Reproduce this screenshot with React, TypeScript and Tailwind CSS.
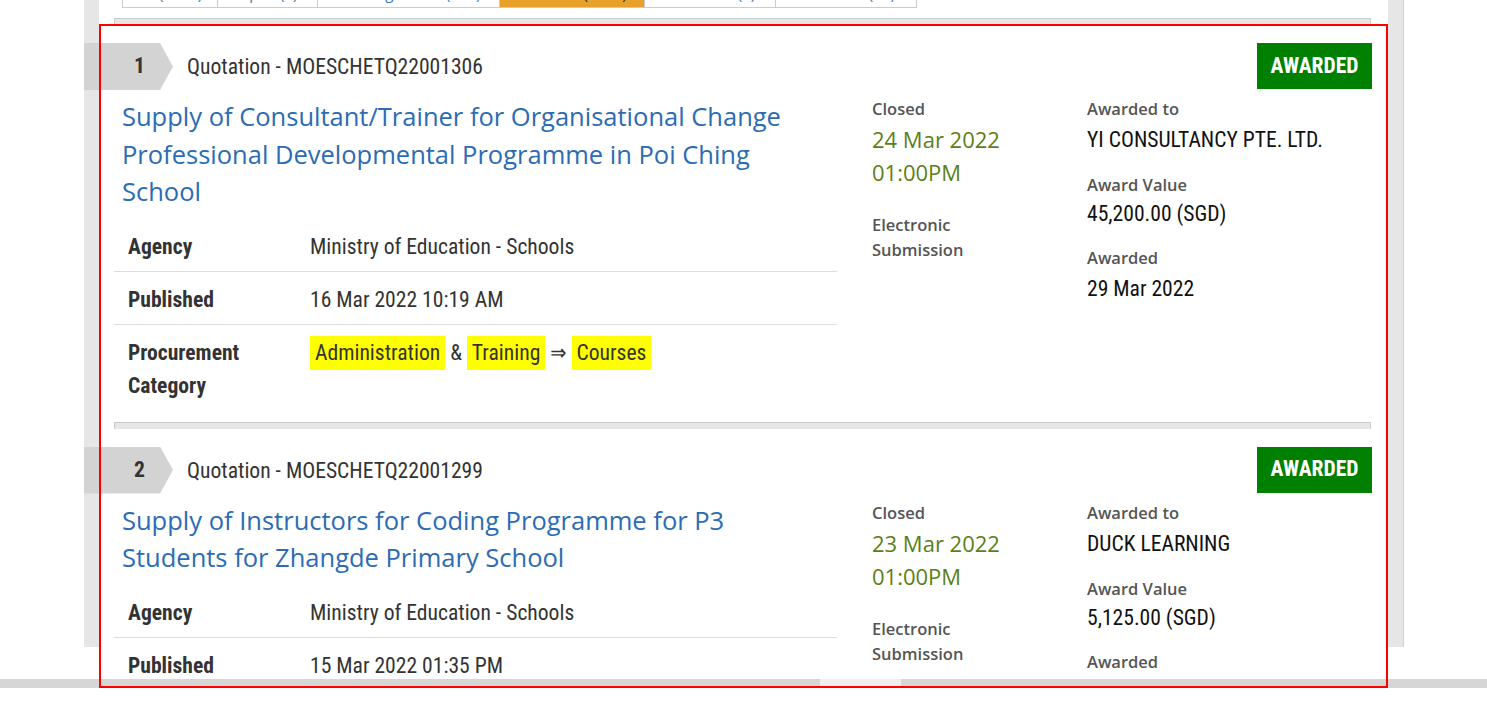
import type { ReactNode } from "react";

const cond = "font-['Roboto_Condensed','Liberation_Sans_Narrow','DejaVu_Sans_Condensed',sans-serif]";
const open = "font-['Open_Sans',sans-serif]";

type Tender = {
  no: number;
  ref: string;
  title: string;
  agency: string;
  published: string;
  closedDate: string;
  closedTime: string;
  awardedTo: string;
  value: string;
  awarded: string;
};

const tabs = [
  { label: "All", count: "(1360)", w: "w-[96px]" },
  { label: "Open", count: "(0)", w: "w-[100px]" },
  { label: "Pending Award", count: "(186)", w: "w-[182px]" },
  { label: "Awarded", count: "(1104)", w: "w-[145px]", active: true },
  { label: "No Award", count: "(0)", w: "w-[131px]" },
  { label: "Cancelled", count: "(70)", w: "w-[141px]" },
];

const tenders: Tender[] = [
  {
    no: 1,
    ref: "Quotation - MOESCHETQ22001306",
    title:
      "Supply of Consultant/Trainer for Organisational Change Professional Developmental Programme in Poi Ching School",
    agency: "Ministry of Education - Schools",
    published: "16 Mar 2022 10:19 AM",
    closedDate: "24 Mar 2022",
    closedTime: "01:00PM",
    awardedTo: "YI CONSULTANCY PTE. LTD.",
    value: "45,200.00 (SGD)",
    awarded: "29 Mar 2022",
  },
  {
    no: 2,
    ref: "Quotation - MOESCHETQ22001299",
    title: "Supply of Instructors for Coding Programme for P3 Students for Zhangde Primary School",
    agency: "Ministry of Education - Schools",
    published: "15 Mar 2022 01:35 PM",
    closedDate: "23 Mar 2022",
    closedTime: "01:00PM",
    awardedTo: "DUCK LEARNING",
    value: "5,125.00 (SGD)",
    awarded: "30 Mar 2022",
  },
];

function Row({ label, children, last }: { label: string; children: ReactNode; last?: boolean }) {
  return (
    <div className={`flex pt-[11px] pb-[8px] text-[21.6px] leading-[33px] text-[#333] ${last ? "" : "border-b border-[#ddd]"}`}>
      <div className="w-[182px] shrink-0 pl-[14px] font-bold">{label}</div>
      <div className="pl-[14px]">{children}</div>
    </div>
  );
}

function Hl({ children }: { children: ReactNode }) {
  return <span className="inline-block bg-[#ffff00] px-[5px] leading-[34px]">{children}</span>;
}

function Separator() {
  return <div className="h-[7px] border-x border-t border-[#ccc] bg-[#e6e6e6]" />;
}

function TenderCard({ t }: { t: Tender }) {
  return (
    <div className="pt-[18px]">
      <div className="flex h-[47px] items-start justify-between">
        <div className="flex h-[47px] items-center">
          <div
            className={`-ml-[30px] flex h-[47px] w-[89px] items-center justify-end bg-[#d3d3d3] pr-[28px] text-[21.6px] font-bold text-[#333] [clip-path:polygon(0_0,76px_0,89px_50%,76px_100%,0_100%)] ${cond}`}
          >
            {t.no}
          </div>
          <div className={`ml-[14px] pt-[2px] text-[21.6px] text-[#333] ${cond}`}>{t.ref}</div>
        </div>
        <div className={`-mr-[1px] flex h-[46px] w-[115px] items-center justify-center bg-[#008000] text-[21.6px] font-bold text-white ${cond}`}>
          AWARDED
        </div>
      </div>

      <div className="mt-[8px] flex">
        <div className="w-[723px] shrink-0">
          <h2 className={`pl-[8px] pr-[20px] text-[25.5px] leading-[37.5px] text-[#2b6cb3] ${open}`}>{t.title}</h2>
          <div className={`mt-[8px] ${cond}`}>
            <Row label="Agency">{t.agency}</Row>
            <Row label="Published">{t.published}</Row>
            <Row label="Procurement Category" last>
              <Hl>Administration</Hl> &amp; <Hl>Training</Hl> ⇒ <Hl>Courses</Hl>
            </Row>
          </div>
        </div>

        <div className={`ml-[35px] w-[215px] shrink-0 ${open}`}>
          <div className="text-[16.5px] font-semibold leading-[22px] text-[#555]">Closed</div>
          <div className="mt-[3px] text-[22px] leading-[33px] text-[#5c7f16]">
            {t.closedDate}
            <br />
            {t.closedTime}
          </div>
          <div className="mt-[23px] text-[16.5px] font-semibold leading-[25px] text-[#555]">
            Electronic
            <br />
            Submission
          </div>
        </div>

        <div className="flex-1">
          <div className={`text-[16.5px] font-semibold leading-[22px] text-[#555] ${open}`}>Awarded to</div>
          <div className={`mt-[5px] text-[21.6px] leading-[30px] text-[#111] ${cond}`}>{t.awardedTo}</div>
          <div className={`mt-[19px] text-[16.5px] font-semibold leading-[22px] text-[#555] ${open}`}>Award Value</div>
          <div className={`mt-[3px] text-[21.6px] leading-[30px] text-[#111] ${cond}`}>{t.value}</div>
          <div className={`mt-[18px] text-[16.5px] font-semibold leading-[22px] text-[#555] ${open}`}>Awarded</div>
          <div className={`mt-[5px] text-[21.6px] leading-[30px] text-[#111] ${cond}`}>{t.awarded}</div>
        </div>
      </div>
      <div className="mt-[12px]">
        <Separator />
      </div>
    </div>
  );
}

export default function App() {
  return (
    <div className="relative h-[713px] w-[1487px] overflow-hidden bg-white">
      <div className="h-[679px] overflow-hidden">
        <div className="ml-[84px] h-full w-[1320px] border-r border-[#d0d0d0] bg-[#e6e6e6] px-[15px]">
          <div className="h-full bg-white pl-[15px] pr-[17px]">
            <div className="-mt-[32px] flex pl-[8px]">
              {tabs.map((tab) => (
                <div
                  key={tab.label}
                  className={`flex h-[40px] items-end justify-center border border-l-0 border-[#ccc] pb-[6px] text-[15px] leading-none first:border-l ${tab.w} ${
                    tab.active ? "bg-[#e8a22a] text-[#222]" : "bg-white text-[#337ab7]"
                  } ${open}`}
                >
                  {tab.label} {tab.count}
                </div>
              ))}
            </div>
            <div className="mt-[10px]">
              <Separator />
            </div>
            {tenders.map((t) => (
              <TenderCard key={t.no} t={t} />
            ))}
          </div>
        </div>
      </div>
      <div className="flex h-[9px] bg-[#d6d6d6]">
        <div className="ml-[820px] w-[81px] bg-[#efefef]" />
      </div>
      <div className="pointer-events-none absolute left-[99px] top-[24px] h-[664px] w-[1289px] border-2 border-[#ff0000]" />
    </div>
  );
}
